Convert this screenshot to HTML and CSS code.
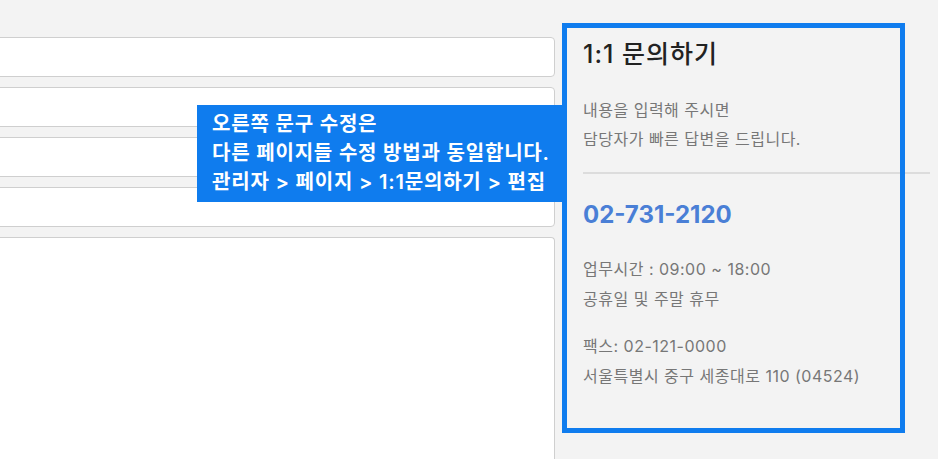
FILE: index.html
```html
<!doctype html>
<html lang="ko">
<head>
  <meta charset="utf-8"/>
  <title>1:1 문의하기</title>
  <link rel="stylesheet" href="styles.css">
</head>
<body>
  <div id="page">
    <div class="form">
      <div class="field"></div>
      <div class="field"></div>
      <div class="field"></div>
      <div class="field"></div>
      <div class="field area"></div>
    </div>
    <div class="side">
      <h2 class="title">1:1 문의하기</h2>
      <p class="desc">내용을 입력해 주시면<br>담당자가 빠른 답변을 드립니다.</p>
      <hr class="line">
      <div class="tel">02-731-2120</div>
      <p class="info">업무시간 : 09:00 ~ 18:00<br>공휴일 및 주말 휴무</p>
      <p class="info fax">팩스: 02-121-0000<br>서울특별시 중구 세종대로 110 (04524)</p>
    </div>
  </div>
  <!-- 편집 안내 -->
  <div class="highlight"></div>
  <div class="tip">오른쪽 문구 수정은<br>다른 페이지들 수정 방법과 동일합니다.<br>관리자 &gt; 페이지 &gt; 1:1문의하기 &gt; 편집</div>
</body>
</html>
```

FILE: styles.css
```css
html, body {
  margin: 0;
  height: 100%;
  overflow: hidden;
  background: #f3f3f3;
  font-family: "Inter", "Noto Sans CJK KR", sans-serif;
  --blue: #0f7cee;
}
#page {
  display: flex;
  height: 100%;
}
.form {
  width: 575px;
  margin-left: -20px;
  padding-top: 37px;
  display: flex;
  flex-direction: column;
  gap: 10px;
  flex-shrink: 0;
}
.field {
  height: 40px;
  flex-shrink: 0;
  box-sizing: border-box;
  background: #fff;
  border: 1px solid #cfcfcf;
  border-radius: 4px;
}
.field.area {
  height: 222px;
  border-bottom: 0;
  border-radius: 4px 4px 0 0;
}
.side {
  width: 347px;
  margin-left: 28px;
  padding-top: 38px;
  color: #777;
  font-size: 16px;
  letter-spacing: 0.5px;
}
.title {
  margin: 0;
  font-size: 25px;
  line-height: 32px;
  font-weight: 500;
  letter-spacing: 1px;
  color: #222;
}
.desc {
  margin: 26px 0 0;
  line-height: 29px;
}
.line {
  margin: 18px 0 0;
  border: 0;
  height: 2px;
  background: #dcdcdc;
}
.tel {
  margin-top: 26px;
  font-size: 24px;
  line-height: 30px;
  font-weight: 700;
  letter-spacing: 0;
  color: #4a7fd6;
}
.info {
  margin: 24px 0 0;
  line-height: 30px;
}
.info.fax {
  margin-top: 17px;
}
.highlight {
  position: absolute;
  left: 562px;
  top: 23px;
  width: 343px;
  height: 410px;
  box-sizing: border-box;
  border: 5px solid var(--blue);
}
.tip {
  position: absolute;
  left: 197px;
  top: 105px;
  width: 365px;
  height: 97px;
  box-sizing: border-box;
  padding: 5px 0 0 15px;
  background: var(--blue);
  color: #fff;
  font-size: 20px;
  font-weight: 600;
  line-height: 29px;
  letter-spacing: 0.8px;
}
```
